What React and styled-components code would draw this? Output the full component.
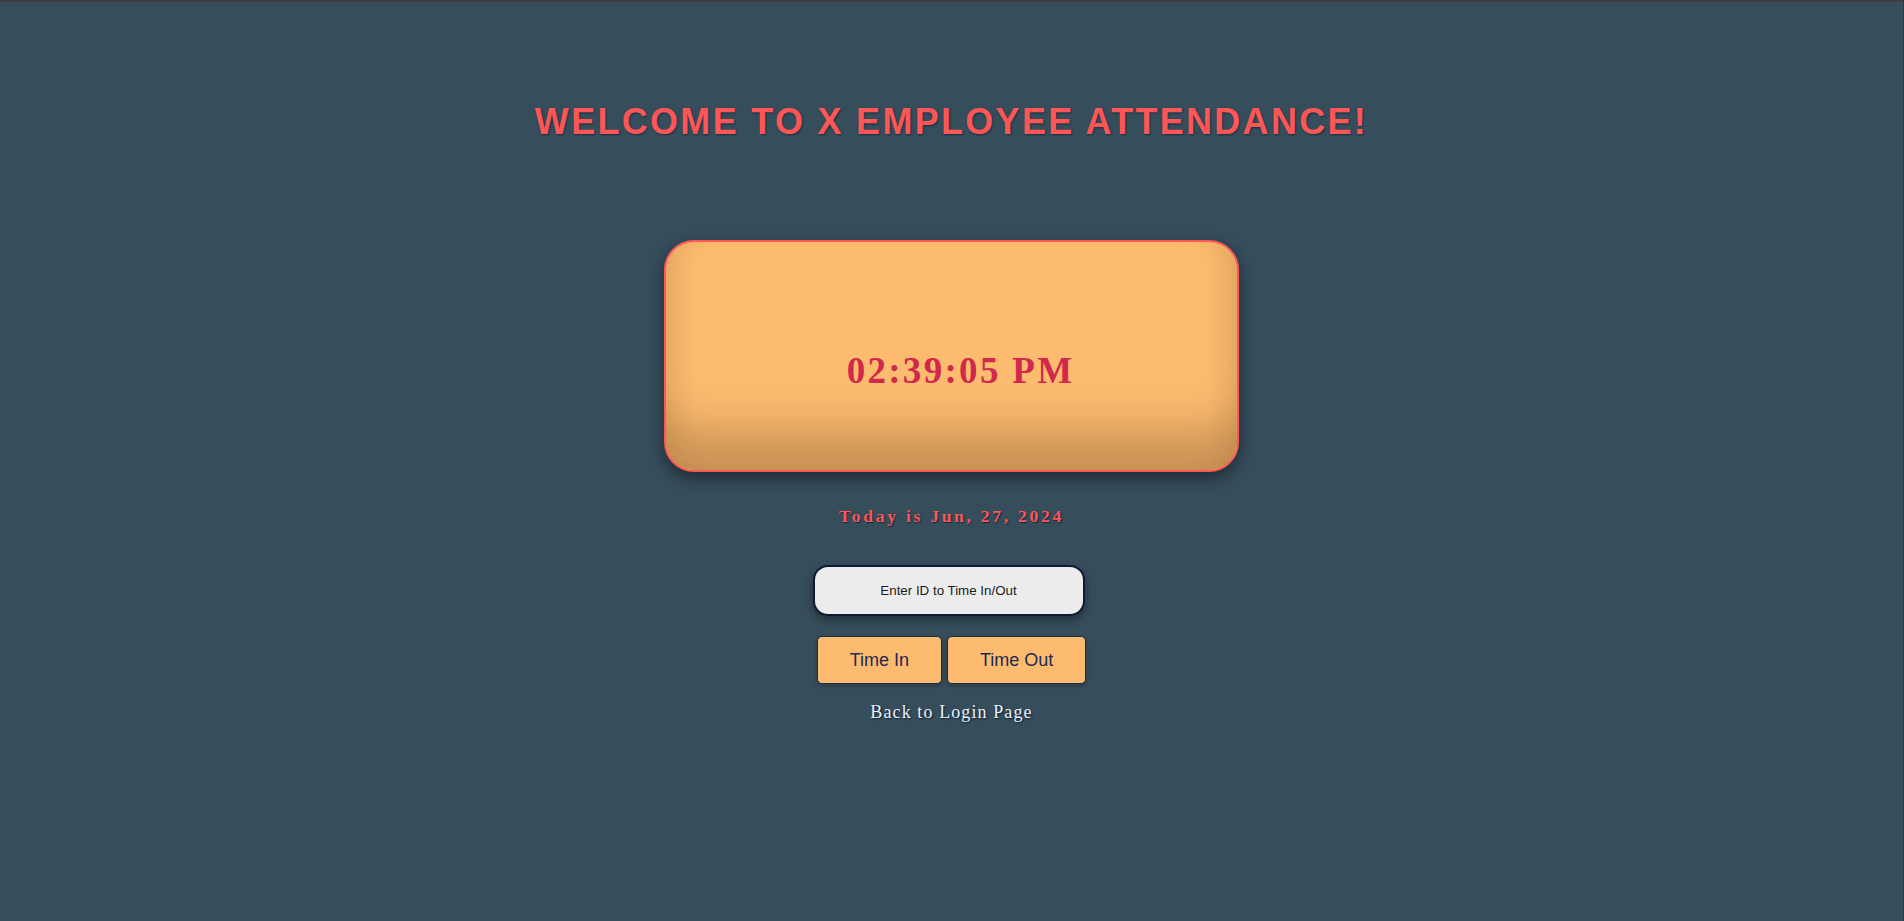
import React from "react";
import styled, { createGlobalStyle } from "styled-components";

const GlobalStyle = createGlobalStyle`
  html, body {
    margin: 0;
    padding: 0;
    background: #364d5c;
  }
  body {
    font-family: "Liberation Sans", Arial, sans-serif;
  }
`;

const Page = styled.div`
  min-height: 100vh;
  box-sizing: border-box;
  border-top: 2px solid #3b3d3f;
  border-right: 1px solid #2a3a46;
  background: #364d5c;
  display: flex;
  flex-direction: column;
  align-items: center;
  padding-top: 99px;
`;

const Title = styled.h1`
  margin: 0;
  font-family: "Liberation Sans", Arial, sans-serif;
  font-size: 36px;
  line-height: 41px;
  font-weight: 700;
  letter-spacing: 2.3px;
  color: #fd5656;
  text-shadow: 1px 1px 2px #123040;
`;

const ClockCard = styled.div`
  box-sizing: border-box;
  margin-top: 98px;
  width: 575px;
  height: 232px;
  border: 2px solid #ff5656;
  border-radius: 30px;
  background: #fdbb6f;
  display: flex;
  align-items: center;
  justify-content: center;
  padding-top: 30px;
  padding-left: 18px;
  box-shadow:
    0 6px 16px rgba(0, 0, 0, 0.45),
    inset 0 -55px 45px -15px rgba(40, 20, 0, 0.24),
    inset 25px 0 30px -20px rgba(60, 30, 0, 0.08),
    inset -25px 0 30px -20px rgba(60, 30, 0, 0.1);
`;

const ClockText = styled.div`
  font-family: "Liberation Serif", "Times New Roman", serif;
  font-weight: 700;
  font-size: 37px;
  line-height: 46px;
  letter-spacing: 2.3px;
  color: #d0294b;
`;

const DateText = styled.div`
  margin-top: 34px;
  font-family: "Liberation Serif", "Times New Roman", serif;
  font-weight: 700;
  font-size: 17.6px;
  line-height: 20px;
  letter-spacing: 2.7px;
  color: #fd5656;
  text-shadow: 1px 1px 1px #102a3a;
`;

const IdInput = styled.input`
  margin-top: 39px;
  box-sizing: border-box;
  width: 272px;
  height: 51px;
  border: 2px solid #0e1b33;
  border-radius: 15px;
  background: #ececec;
  text-align: center;
  font-family: "Liberation Sans", Arial, sans-serif;
  font-size: 13.333px;
  color: #111;
  outline: none;
  box-shadow: 0 4px 8px rgba(0, 0, 0, 0.4);
  transform: translateX(-3px);

  &::placeholder {
    color: #1a1a1a;
    opacity: 1;
  }
`;

const ButtonRow = styled.div`
  margin-top: 20px;
  display: flex;
  gap: 5px;
`;

const ActionButton = styled.button`
  box-sizing: border-box;
  height: 48px;
  padding: 0 32px;
  border: 1px solid #1d2c42;
  border-radius: 5px;
  background: #fdbb6f;
  color: #1c2a55;
  font-family: "Liberation Sans", Arial, sans-serif;
  font-size: 18px;
  cursor: pointer;
  box-shadow: 0 2px 4px rgba(0, 0, 0, 0.25);
`;

const BackLink = styled.a`
  margin-top: 18px;
  font-family: "Liberation Serif", "Times New Roman", serif;
  font-size: 18px;
  line-height: 21px;
  letter-spacing: 1.1px;
  color: #e8f0fa;
  text-decoration: none;
  text-shadow: 1px 1px 2px #0c1c28;
  cursor: pointer;
`;

export default function App() {
  return (
    <>
      <GlobalStyle />
      <Page>
        <Title>WELCOME TO X EMPLOYEE ATTENDANCE!</Title>
        <ClockCard>
          <ClockText>02:39:05 PM</ClockText>
        </ClockCard>
        <DateText>Today is Jun, 27, 2024</DateText>
        <IdInput type="text" placeholder="Enter ID to Time In/Out" />
        <ButtonRow>
          <ActionButton>Time In</ActionButton>
          <ActionButton>Time Out</ActionButton>
        </ButtonRow>
        <BackLink href="#">Back to Login Page</BackLink>
      </Page>
    </>
  );
}
